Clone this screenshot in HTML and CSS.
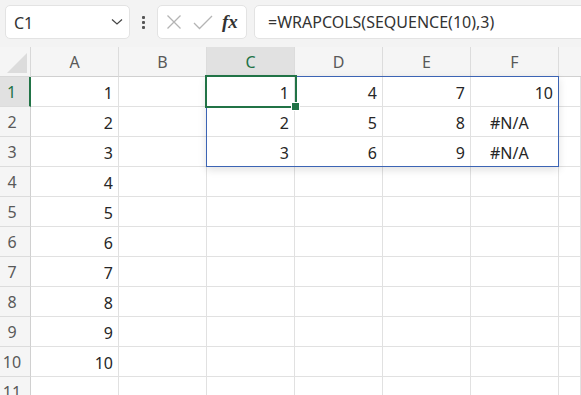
FILE: index.html
```html
<!DOCTYPE html>
<html lang="ja">
<head>
  <meta charset="UTF-8" />
  <title>WRAPCOLS</title>
  <link rel="stylesheet" href="styles.css">
</head>
<body>
  <div class="toolbar">
    <div class="name-box">
      <span>C1</span>
      <svg class="chevron" width="12" height="8" viewBox="0 0 12 8"><path d="M1 1.5 L6 6 L11 1.5" fill="none" stroke="#444" stroke-width="1.2"/></svg>
    </div>
    <div class="dots"><i></i><i></i><i></i></div>
    <div class="fx-box">
      <svg width="16" height="16" viewBox="0 0 16 16"><path d="M1.5 1.5 L14.5 14.5 M14.5 1.5 L1.5 14.5" stroke="#b4b4b4" stroke-width="1.3"/></svg>
      <svg width="20" height="16" viewBox="0 0 20 16"><path d="M1 9 L6.5 14.5 L19 2" fill="none" stroke="#b4b4b4" stroke-width="1.3"/></svg>
      <span class="fx">fx</span>
    </div>
    <div class="formula">=WRAPCOLS(SEQUENCE(10),3)</div>
  </div>

  <div class="sheet-wrap">
    <div class="sheet">
      <div class="corner"><span class="tri"></span></div>
      <div class="col-hd">A</div>
      <div class="col-hd">B</div>
      <div class="col-hd sel">C</div>
      <div class="col-hd">D</div>
      <div class="col-hd">E</div>
      <div class="col-hd">F</div>
      <div class="col-hd last"></div>

      <div class="row-hd sel">1</div><div class="cell">1</div><div class="cell"></div><div class="cell">1</div><div class="cell">4</div><div class="cell">7</div><div class="cell">10</div><div class="cell"></div>
      <div class="row-hd">2</div><div class="cell">2</div><div class="cell"></div><div class="cell">2</div><div class="cell">5</div><div class="cell">8</div><div class="cell err">#N/A</div><div class="cell"></div>
      <div class="row-hd">3</div><div class="cell">3</div><div class="cell"></div><div class="cell">3</div><div class="cell">6</div><div class="cell">9</div><div class="cell err">#N/A</div><div class="cell"></div>
      <div class="row-hd">4</div><div class="cell">4</div><div class="cell"></div><div class="cell"></div><div class="cell"></div><div class="cell"></div><div class="cell"></div><div class="cell"></div>
      <div class="row-hd">5</div><div class="cell">5</div><div class="cell"></div><div class="cell"></div><div class="cell"></div><div class="cell"></div><div class="cell"></div><div class="cell"></div>
      <div class="row-hd">6</div><div class="cell">6</div><div class="cell"></div><div class="cell"></div><div class="cell"></div><div class="cell"></div><div class="cell"></div><div class="cell"></div>
      <div class="row-hd">7</div><div class="cell">7</div><div class="cell"></div><div class="cell"></div><div class="cell"></div><div class="cell"></div><div class="cell"></div><div class="cell"></div>
      <div class="row-hd">8</div><div class="cell">8</div><div class="cell"></div><div class="cell"></div><div class="cell"></div><div class="cell"></div><div class="cell"></div><div class="cell"></div>
      <div class="row-hd">9</div><div class="cell">9</div><div class="cell"></div><div class="cell"></div><div class="cell"></div><div class="cell"></div><div class="cell"></div><div class="cell"></div>
      <div class="row-hd">10</div><div class="cell">10</div><div class="cell"></div><div class="cell"></div><div class="cell"></div><div class="cell"></div><div class="cell"></div><div class="cell"></div>
      <div class="row-hd">11</div><div class="cell"></div><div class="cell"></div><div class="cell"></div><div class="cell"></div><div class="cell"></div><div class="cell"></div><div class="cell"></div>
    </div>

    <div class="overlay">
      <div class="spill"></div>
      <div class="active-cell"></div>
    </div>
  </div>
</body>
</html>
```

FILE: styles.css
```css
* { box-sizing: border-box; }

html, body {
  margin: 0;
  height: 100%;
  overflow: hidden;
}

body {
  font-family: "Noto Sans", "Noto Sans CJK JP", sans-serif;
  font-size: 16px;
  color: #262626;
  background: #f3f3f3;
}

.toolbar {
  display: flex;
  align-items: center;
  height: 47px;
  padding: 5px 0 8px 5px;
  background: #f3f3f3;
}

.name-box {
  display: flex;
  align-items: center;
  justify-content: space-between;
  width: 125px;
  height: 34px;
  padding: 0 6px 0 8px;
  background: white;
  border: 1px solid #e3e3e3;
  border-radius: 5px;
  color: #333;
}

.name-box span { padding-top: 1px; }

.dots {
  display: flex;
  flex-direction: column;
  gap: 2px;
  width: 27px;
  align-items: center;
}

.dots i {
  width: 3px;
  height: 3px;
  background: #555;
  border-radius: 1px;
}

.fx-box {
  display: flex;
  align-items: center;
  gap: 11px;
  width: 90px;
  height: 34px;
  padding: 0 0 0 8px;
  background: white;
  border: 1px solid #e3e3e3;
  border-radius: 5px;
}

.fx {
  font-family: "Liberation Serif", serif;
  font-style: italic;
  font-weight: bold;
  font-size: 19px;
  color: #333;
  margin-left: -2px;
}

.formula {
  flex: 1;
  height: 34px;
  margin-left: 7px;
  margin-right: -10px;
  padding: 5px 0 0 13px;
  background: white;
  border: 1px solid #e3e3e3;
  border-radius: 5px;
  color: #333;
}

/* the cells and the selection layer share one grid area */
.sheet-wrap {
  display: grid;
}

.sheet,
.overlay {
  grid-area: 1 / 1;
  display: grid;
  grid-template-columns: 31px 88px 88px 88px 88px 88px 88px 1fr;
  grid-auto-rows: 30px;
}

.sheet { background: white; }

.overlay { pointer-events: none; }

.corner,
.col-hd,
.row-hd {
  background: #f5f5f5;
  color: #595959;
}

.corner {
  position: relative;
  border-right: 1px solid #d8d8d8;
  border-bottom: 1px solid #d8d8d8;
}

.tri {
  position: absolute;
  right: 3px;
  bottom: 3px;
  width: 0;
  height: 0;
  border-left: 20px solid transparent;
  border-bottom: 20px solid #dcdcdc;
}

.col-hd {
  display: flex;
  align-items: center;
  justify-content: center;
  padding-top: 1px;
  border-right: 1px solid #dcdcdc;
  border-bottom: 1px solid #d0d0d0;
}

.col-hd.last { border-right: none; }

.col-hd.sel {
  background: #e1e1e1;
  color: #217346;
  border-bottom: 2px solid #217346;
}

.row-hd {
  display: flex;
  align-items: center;
  justify-content: center;
  padding: 1px 6px 0 0;
  border-right: 1px solid #d0d0d0;
  border-bottom: 1px solid #dcdcdc;
}

.row-hd.sel {
  background: #e1e1e1;
  color: #217346;
  border-right: 2px solid #217346;
}

.cell {
  display: flex;
  align-items: center;
  justify-content: flex-end;
  padding: 2px 5px 0 0;
  border-right: 1px solid #e1e1e1;
  border-bottom: 1px solid #e1e1e1;
  color: #262626;
}

.cell.err {
  justify-content: flex-start;
  padding-left: 19px;
  padding-right: 0;
}

.spill {
  grid-row: 2 / 5;
  grid-column: 4 / 8;
  margin: -1px 0 0 -1px;
  border: 1px solid #3c64b4;
  box-shadow: 0 3px 8px rgba(0, 0, 0, 0.12);
}

.active-cell {
  position: relative;
  grid-row: 2 / 3;
  grid-column: 4 / 5;
  margin: -2px -2px -1px -2px;
  border: 2px solid #217346;
}

.active-cell::after {
  content: "";
  position: absolute;
  right: -5px;
  bottom: -5px;
  width: 7px;
  height: 7px;
  background: #217346;
  border: 1px solid white;
}
```
